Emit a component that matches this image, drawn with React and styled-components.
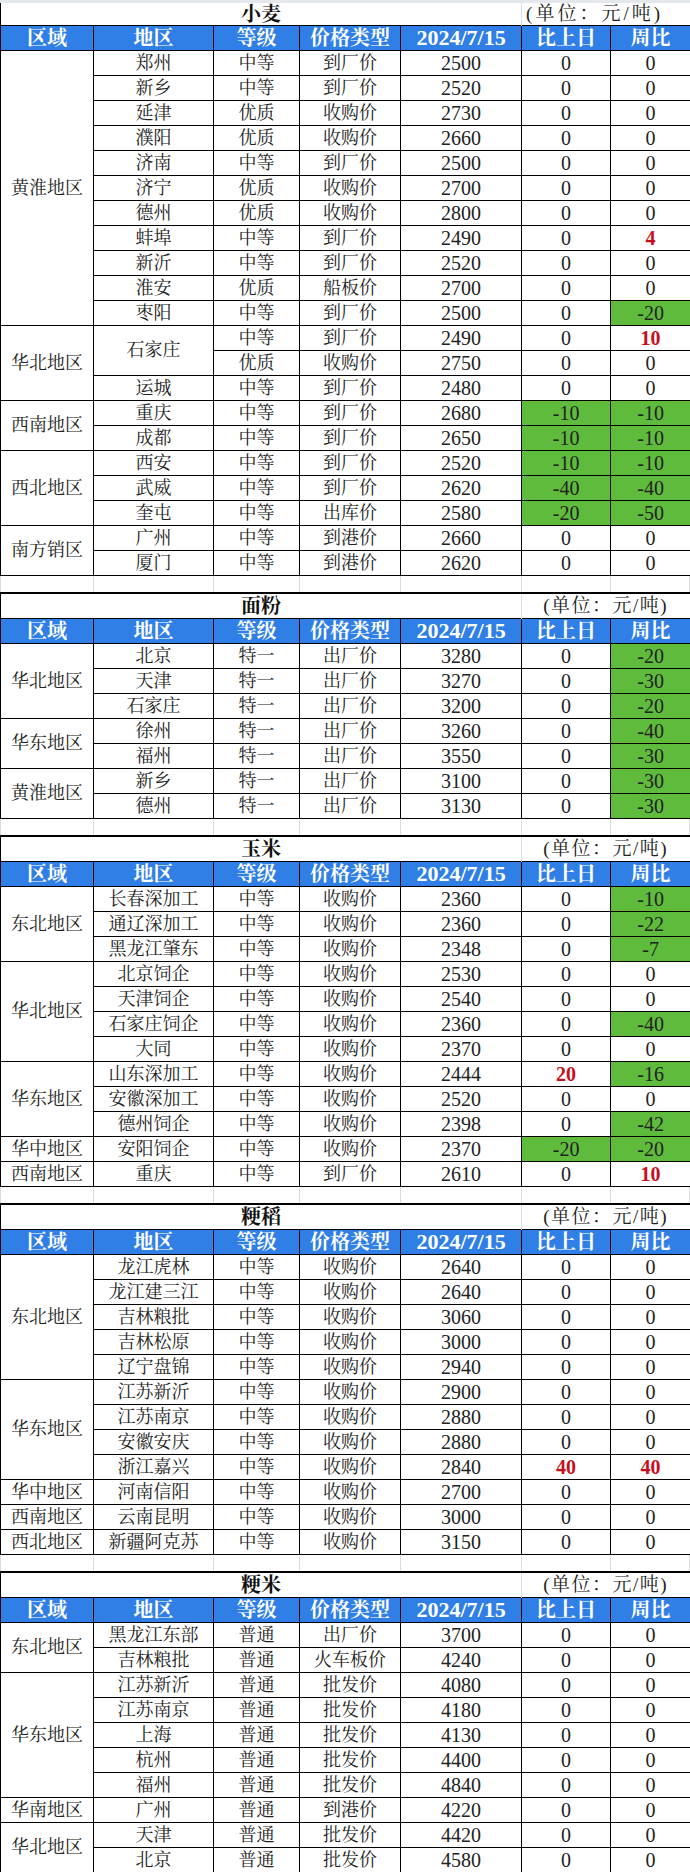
import React from "react";
import styled, { createGlobalStyle } from "styled-components";

const GlobalStyle = createGlobalStyle`
  html, body {
    margin: 0;
    padding: 0;
    background: #fff;
  }
  body {
    font-family: "Liberation Serif", "Noto Serif CJK SC", "Noto Sans CJK SC", serif;
    color: #222;
  }
`;

const COLS = [93, 120, 86, 101, 121, 89, 80];
const HEAD = ["区域", "地区", "等级", "价格类型", "2024/7/15", "比上日", "周比"];

const sections = [
  {
    title: "小麦",
    unitAlign: "left",
    groups: [
      {
        region: "黄淮地区",
        rows: [
          ["郑州", "中等", "到厂价", "2500", "0", "0"],
          ["新乡", "中等", "到厂价", "2520", "0", "0"],
          ["延津", "优质", "收购价", "2730", "0", "0"],
          ["濮阳", "优质", "收购价", "2660", "0", "0"],
          ["济南", "中等", "到厂价", "2500", "0", "0"],
          ["济宁", "优质", "收购价", "2700", "0", "0"],
          ["德州", "优质", "收购价", "2800", "0", "0"],
          ["蚌埠", "中等", "到厂价", "2490", "0", "4"],
          ["新沂", "中等", "到厂价", "2520", "0", "0"],
          ["淮安", "优质", "船板价", "2700", "0", "0"],
          ["枣阳", "中等", "到厂价", "2500", "0", "-20"],
        ],
      },
      {
        region: "华北地区",
        rows: [
          ["石家庄", "中等", "到厂价", "2490", "0", "10"],
          [null, "优质", "收购价", "2750", "0", "0"],
          ["运城", "中等", "到厂价", "2480", "0", "0"],
        ],
      },
      {
        region: "西南地区",
        rows: [
          ["重庆", "中等", "到厂价", "2680", "-10", "-10"],
          ["成都", "中等", "到厂价", "2650", "-10", "-10"],
        ],
      },
      {
        region: "西北地区",
        rows: [
          ["西安", "中等", "到厂价", "2520", "-10", "-10"],
          ["武威", "中等", "到厂价", "2620", "-40", "-40"],
          ["奎屯", "中等", "出库价", "2580", "-20", "-50"],
        ],
      },
      {
        region: "南方销区",
        rows: [
          ["广州", "中等", "到港价", "2660", "0", "0"],
          ["厦门", "中等", "到港价", "2620", "0", "0"],
        ],
      },
    ],
  },
  {
    title: "面粉",
    groups: [
      {
        region: "华北地区",
        rows: [
          ["北京", "特一", "出厂价", "3280", "0", "-20"],
          ["天津", "特一", "出厂价", "3270", "0", "-30"],
          ["石家庄", "特一", "出厂价", "3200", "0", "-20"],
        ],
      },
      {
        region: "华东地区",
        rows: [
          ["徐州", "特一", "出厂价", "3260", "0", "-40"],
          ["福州", "特一", "出厂价", "3550", "0", "-30"],
        ],
      },
      {
        region: "黄淮地区",
        rows: [
          ["新乡", "特一", "出厂价", "3100", "0", "-30"],
          ["德州", "特一", "出厂价", "3130", "0", "-30"],
        ],
      },
    ],
  },
  {
    title: "玉米",
    groups: [
      {
        region: "东北地区",
        rows: [
          ["长春深加工", "中等", "收购价", "2360", "0", "-10"],
          ["通辽深加工", "中等", "收购价", "2360", "0", "-22"],
          ["黑龙江肇东", "中等", "收购价", "2348", "0", "-7"],
        ],
      },
      {
        region: "华北地区",
        rows: [
          ["北京饲企", "中等", "收购价", "2530", "0", "0"],
          ["天津饲企", "中等", "收购价", "2540", "0", "0"],
          ["石家庄饲企", "中等", "收购价", "2360", "0", "-40"],
          ["大同", "中等", "收购价", "2370", "0", "0"],
        ],
      },
      {
        region: "华东地区",
        rows: [
          ["山东深加工", "中等", "收购价", "2444", "20", "-16"],
          ["安徽深加工", "中等", "收购价", "2520", "0", "0"],
          ["德州饲企", "中等", "收购价", "2398", "0", "-42"],
        ],
      },
      {
        region: "华中地区",
        rows: [["安阳饲企", "中等", "收购价", "2370", "-20", "-20"]],
      },
      {
        region: "西南地区",
        rows: [["重庆", "中等", "到厂价", "2610", "0", "10"]],
      },
    ],
  },
  {
    title: "粳稻",
    groups: [
      {
        region: "东北地区",
        rows: [
          ["龙江虎林", "中等", "收购价", "2640", "0", "0"],
          ["龙江建三江", "中等", "收购价", "2640", "0", "0"],
          ["吉林粮批", "中等", "收购价", "3060", "0", "0"],
          ["吉林松原", "中等", "收购价", "3000", "0", "0"],
          ["辽宁盘锦", "中等", "收购价", "2940", "0", "0"],
        ],
      },
      {
        region: "华东地区",
        rows: [
          ["江苏新沂", "中等", "收购价", "2900", "0", "0"],
          ["江苏南京", "中等", "收购价", "2880", "0", "0"],
          ["安徽安庆", "中等", "收购价", "2880", "0", "0"],
          ["浙江嘉兴", "中等", "收购价", "2840", "40", "40"],
        ],
      },
      {
        region: "华中地区",
        rows: [["河南信阳", "中等", "收购价", "2700", "0", "0"]],
      },
      {
        region: "西南地区",
        rows: [["云南昆明", "中等", "收购价", "3000", "0", "0"]],
      },
      {
        region: "西北地区",
        rows: [["新疆阿克苏", "中等", "收购价", "3150", "0", "0"]],
      },
    ],
  },
  {
    title: "粳米",
    last: true,
    groups: [
      {
        region: "东北地区",
        rows: [
          ["黑龙江东部", "普通", "出厂价", "3700", "0", "0"],
          ["吉林粮批", "普通", "火车板价", "4240", "0", "0"],
        ],
      },
      {
        region: "华东地区",
        rows: [
          ["江苏新沂", "普通", "批发价", "4080", "0", "0"],
          ["江苏南京", "普通", "批发价", "4180", "0", "0"],
          ["上海", "普通", "批发价", "4130", "0", "0"],
          ["杭州", "普通", "批发价", "4400", "0", "0"],
          ["福州", "普通", "批发价", "4840", "0", "0"],
        ],
      },
      {
        region: "华南地区",
        rows: [["广州", "普通", "到港价", "4220", "0", "0"]],
      },
      {
        region: "华北地区",
        rows: [
          ["天津", "普通", "批发价", "4420", "0", "0"],
          ["北京", "普通", "批发价", "4580", "0", "0"],
        ],
      },
    ],
  },
];

const toneOf = (v) => {
  const n = Number(v);
  if (n < 0) return "down";
  if (n > 0) return "up";
  return "flat";
};

const Section = ({ data, first }) => {
  return (
    <Sheet>
      <colgroup>
        {COLS.map((w, i) => (
          <col key={i} style={{ width: w }} />
        ))}
      </colgroup>
      <tbody>
        <TitleRow $first={first}>
          <TitleCell colSpan={5}>{data.title}</TitleCell>
          <UnitCell colSpan={2} $align={data.unitAlign}>
            (单位：元/吨)
          </UnitCell>
        </TitleRow>
        <HeadRow>
          {HEAD.map((h) => (
            <HeadCell key={h} $num={h.startsWith("2024")}>
              {h}
            </HeadCell>
          ))}
        </HeadRow>
        {data.groups.map((g) =>
          g.rows.map((r, i) => {
            const [place, grade, type, price, d, w] = r;
            let span = 1;
            if (place !== null) {
              let j = i + 1;
              while (j < g.rows.length && g.rows[j][0] === null) {
                span++;
                j++;
              }
            }
            return (
              <Row key={g.region + i}>
                {i === 0 && <Cell rowSpan={g.rows.length}>{g.region}</Cell>}
                {place !== null && <Cell rowSpan={span}>{place}</Cell>}
                <Cell>{grade}</Cell>
                <Cell>{type}</Cell>
                <NumCell>{price}</NumCell>
                <Change $tone={toneOf(d)}>{d}</Change>
                <Change $tone={toneOf(w)}>{w}</Change>
              </Row>
            );
          })
        )}
      </tbody>
    </Sheet>
  );
};

const App = () => {
  return (
    <Page>
      <GlobalStyle />
      {sections.map((s, i) => (
        <React.Fragment key={s.title}>
          <Section data={s} first={i === 0} />
          {!s.last && (
            <Gap>
              {COLS.map((w, k) => (
                <GapCell key={k} />
              ))}
            </Gap>
          )}
        </React.Fragment>
      ))}
    </Page>
  );
};

export default App;

const Page = styled.div`
  width: 690px;
  border-top: 3px solid #e4e8ee;
  background: #fff;
`;

const Sheet = styled.table`
  width: 690px;
  border-collapse: collapse;
  table-layout: fixed;
`;

const TitleRow = styled.tr`
  height: ${(p) => (p.$first ? "22px" : "25.5px")};
  td {
    border-top: ${(p) => (p.$first ? "none" : "2px solid #000")};
  }
`;

const TitleCell = styled.td`
  padding: 0;
  text-align: center;
  font-size: 20px;
  font-weight: bold;
  color: #111;
  border-left: 1px solid #000;
  line-height: 1;
`;

const UnitCell = styled.td`
  padding: ${(p) => (p.$align === "left" ? "0 0 0 4px" : "0 22px 0 0")};
  text-align: ${(p) => (p.$align === "left" ? "left" : "right")};
  font-size: 19px;
  letter-spacing: ${(p) => (p.$align === "left" ? "3px" : "1.5px")};
  color: #222;
  border-left: 1px solid #dcdcdc;
  border-right: 1px solid #000;
  line-height: 1;
  white-space: nowrap;
  overflow: hidden;
`;

const HeadRow = styled.tr`
  height: 25px;
`;

const HeadCell = styled.td`
  padding: 0;
  background: #2f7fe6;
  color: #fff;
  font-size: ${(p) => (p.$num ? "22px" : "20px")};
  font-weight: bold;
  text-align: center;
  border: 1px solid #000;
  line-height: 1;
  white-space: nowrap;
  overflow: hidden;
`;

const Row = styled.tr`
  height: 25px;
`;

const Cell = styled.td`
  padding: 0;
  text-align: center;
  font-size: 18px;
  color: #222;
  border: 1px solid #000;
  line-height: 1;
  white-space: nowrap;
  overflow: hidden;
`;

const NumCell = styled(Cell)`
  font-size: 20px;
`;

const Change = styled(NumCell)`
  background: ${(p) => (p.$tone === "down" ? "#5fbb3c" : "transparent")};
  color: ${(p) => (p.$tone === "up" ? "#c8101c" : "#222")};
  font-weight: ${(p) => (p.$tone === "up" ? "bold" : "normal")};
`;

const Gap = styled.div`
  display: grid;
  grid-template-columns: ${COLS.map((w) => w + "px").join(" ")};
  height: 16px;
`;

const GapCell = styled.div`
  border-left: 1px solid #dcdcdc;
  &:last-child {
    border-right: 1px solid #dcdcdc;
  }
`;
